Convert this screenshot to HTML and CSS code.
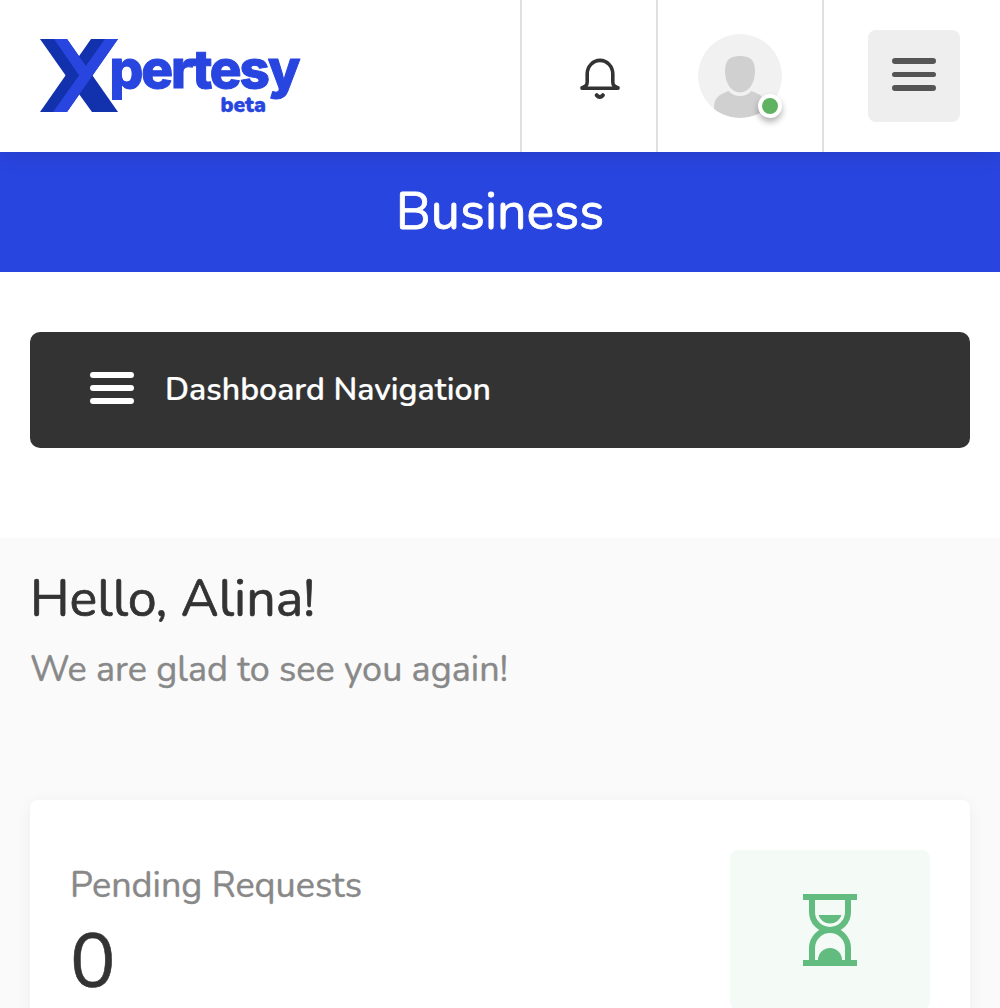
FILE: index.html
```html
<!DOCTYPE html>
<html lang="en">
<head>
<meta charset="utf-8">
<title>Xpertesy - Business</title>
<link rel="stylesheet" href="styles.css">
</head>
<body>
<header class="header">
  <a class="logo" aria-label="Xpertesy beta">
    <svg width="270" height="90" viewBox="0 0 270 90">
      <path fill="#1232ad" d="M0 9H27L78 82H52L26 46Z"/>
      <path fill="#1232ad" d="M51 9H78L27 82H0Z"/>
      <path fill="#2845df" d="M14 9H27L47 37.500L39.500 46Z"/>
      <path fill="#2845df" d="M65 9H78L27 82H13Z"/>
      <text class="logo-name" x="69.500" y="58.300" textLength="191" lengthAdjust="spacing">pertesy</text>
      <text class="logo-tag" x="180.500" y="82" textLength="45.500" lengthAdjust="spacingAndGlyphs">beta</text>
    </svg>
  </a>
  <nav class="tools">
    <div class="tool tool-bell">
      <svg width="44" height="44" viewBox="0 0 44 44" fill="none" stroke="#333" stroke-width="3.6" stroke-linecap="round" stroke-linejoin="round">
        <path d="M4 32.3H40M4 31.7Q9.2 30.5 9.2 26V18A12.8 13.6 0 0 1 34.8 18V26Q34.8 30.5 40 31.7"/>
        <path d="M18.7 39.2Q21.8 43 24.9 39.2" stroke-width="4"/>
      </svg>
    </div>
    <div class="tool tool-user">
      <div class="avatar">
        <svg width="84" height="84" viewBox="0 0 84 84">
          <defs><clipPath id="face"><circle cx="42" cy="42" r="42"/></clipPath></defs>
          <circle cx="42" cy="42" r="42" fill="#f1f1f1"/>
          <g clip-path="url(#face)" fill="#d0d0d0">
            <path d="M42 22C53 22 57 27 57 37C57 49 51 58.500 42 58.500S27 49 27 37C27 27 31 22 42 22Z"/>
            <path d="M16 84V75C16 64 20 61 30.500 57Q35 62 42 62T53.500 57C64 61 68 64 68 75V84Z"/>
          </g>
        </svg>
        <span class="status"></span>
      </div>
    </div>
    <div class="tool tool-menu">
      <button class="menu" aria-label="Menu"><span class="bars"><i></i><i></i><i></i></span></button>
    </div>
  </nav>
</header>
<div class="banner">Business</div>
<div class="nav-wrap">
  <a class="dash-nav"><span class="bars"><i></i><i></i><i></i></span><span class="dash-text">Dashboard Navigation</span></a>
</div>
<main class="content">
  <h1 class="hello">Hello, Alina!</h1>
  <p class="sub">We are glad to see you again!</p>
  <section class="card">
    <div class="stat">
      <span class="stat-label">Pending Requests</span>
      <span class="stat-value">0</span>
    </div>
    <div class="stat-icon">
      <svg width="54" height="72" viewBox="0 0 54 72" fill="#62bb7f">
        <path d="M0 0H54V6H0ZM0 66H54V72H0Z"/>
        <path fill="none" stroke="#62bb7f" stroke-width="6" d="M9 5V18A18 18 0 0 0 45 18V5M9 67V54A18 18 0 0 1 45 54V67"/>
        <path d="M15.500 21H38.500A12 12 0 0 1 15.500 21ZM15 66A12 12 0 0 1 39 66Z"/>
      </svg>
    </div>
  </section>
</main>
</body>
</html>
```
FILE: styles.css
```css
* { box-sizing: border-box; }
body {
  margin: 0;
  height: 1008px;
  overflow: hidden;
  background: #fff;
  color: #333;
  font-family: Nunito, Lato, "Open Sans", sans-serif;
}
.header {
  position: relative;
  display: flex;
  justify-content: space-between;
  height: 152px;
  background: #fff;
  box-shadow: 0 0 24px rgba(0, 0, 0, .12);
  z-index: 1;
}
.logo { padding: 30px 0 0 40px; }
.logo svg { display: block; overflow: visible; }
.logo-name, .logo-tag { fill: #2845df; stroke: #2845df; stroke-linejoin: round; }
.logo-name { font-family: Inter, sans-serif; font-weight: 800; font-size: 53px; stroke-width: 1px; }
.logo-tag { font-weight: 900; font-size: 21px; stroke-width: .3px; }
.tools { display: flex; }
.tool { display: flex; align-items: center; border-left: 2px solid #e0e0e0; }
.tool-bell { width: 136px; padding: 4px 0 0 56px; }
.tool-user { width: 166px; padding-left: 40px; }
.tool-menu { width: 178px; padding-left: 44px; }
.avatar { position: relative; width: 84px; height: 84px; }
.avatar svg { display: block; }
.status {
  position: absolute;
  right: 0;
  bottom: 0;
  width: 24px;
  height: 24px;
  border: 4px solid #fff;
  border-radius: 50%;
  background: #5fb25f;
  box-shadow: 0 4px 6px rgba(0, 0, 0, .3);
}
.menu {
  width: 92px;
  height: 92px;
  padding: 0 0 3px;
  border: 0;
  border-radius: 8px;
  background: #eee;
  color: #555;
  display: flex;
  align-items: center;
  justify-content: center;
}
.bars { display: flex; flex-direction: column; gap: 7.500px; width: 44px; }
.bars i { height: 5.700px; border-radius: 3px; background: currentColor; }
.banner {
  display: flex;
  align-items: center;
  justify-content: center;
  height: 120px;
  padding-bottom: 2px;
  background: #2845df;
  color: #fff;
  font-size: 52px;
  -webkit-text-stroke: .8px;
}
.nav-wrap { padding: 60px 30px 90px; }
.dash-nav {
  display: flex;
  align-items: center;
  gap: 31px;
  height: 116px;
  padding: 0 60px 4px;
  border-radius: 10px;
  background: #333;
  color: #fff;
}
.dash-text { padding-top: 2px; font-size: 32px; font-weight: 600; -webkit-text-stroke: .2px; }
.content { height: 470px; padding: 31px 30px 0; background: #fafafa; overflow: hidden; }
.hello { margin: 0; font-size: 52px; line-height: 60px; font-weight: 400; -webkit-text-stroke: .7px; }
.sub { margin: 16px 0 0; font-size: 36px; line-height: 50px; color: #888; -webkit-text-stroke: .4px; }
.card {
  display: flex;
  justify-content: space-between;
  height: 260px;
  margin-top: 105px;
  padding: 50px 40px;
  border-radius: 8px;
  background: #fff;
  box-shadow: 0 4px 16px rgba(0, 0, 0, .06);
}
.stat { display: flex; flex-direction: column; gap: 13px; padding-top: 11px; }
.stat-label { font-size: 36px; line-height: 50px; color: #888; -webkit-text-stroke: .4px; }
.stat-value { font-size: 76px; line-height: 76px; -webkit-text-stroke: .6px; }
.stat-icon {
  display: flex;
  align-items: center;
  justify-content: center;
  width: 200px;
  height: 160px;
  border-radius: 8px;
  background: #f4faf6;
}
```
